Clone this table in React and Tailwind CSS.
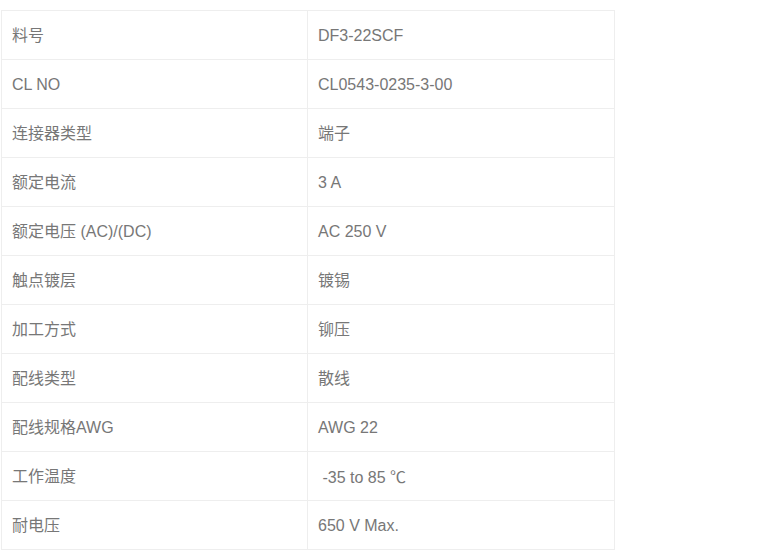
const rows = [
  ['料号', 'DF3-22SCF'],
  ['CL NO', 'CL0543-0235-3-00'],
  ['连接器类型', '端子'],
  ['额定电流', '3 A'],
  ['额定电压 (AC)/(DC)', 'AC 250 V'],
  ['触点镀层', '镀锡'],
  ['加工方式', '铆压'],
  ['配线类型', '散线'],
  ['配线规格AWG', 'AWG 22'],
  ['工作温度', <>{'\u00a0-35 to 85 '}<span className="font-['Noto_Sans_CJK_SC',sans-serif]">℃</span></>],
  ['耐电压', '650 V Max.'],
];

export default function App() {
  return (
    <div className="w-[767px] h-[555px] bg-white pt-[10px] pl-[1px] font-['Liberation_Sans','Noto_Sans_CJK_SC',sans-serif] text-[16px] text-[#777]">
      <table className="w-[614px] border-collapse table-fixed">
        <tbody>
          {rows.map(([label, value]) => (
            <tr key={label} className="h-[49px]">
              <td className="w-[306px] border border-[#eeeeee] px-[10px] pt-[2px] align-middle">{label}</td>
              <td className="border border-[#eeeeee] px-[10px] pt-[2px] align-middle">{value}</td>
            </tr>
          ))}
        </tbody>
      </table>
    </div>
  );
}
